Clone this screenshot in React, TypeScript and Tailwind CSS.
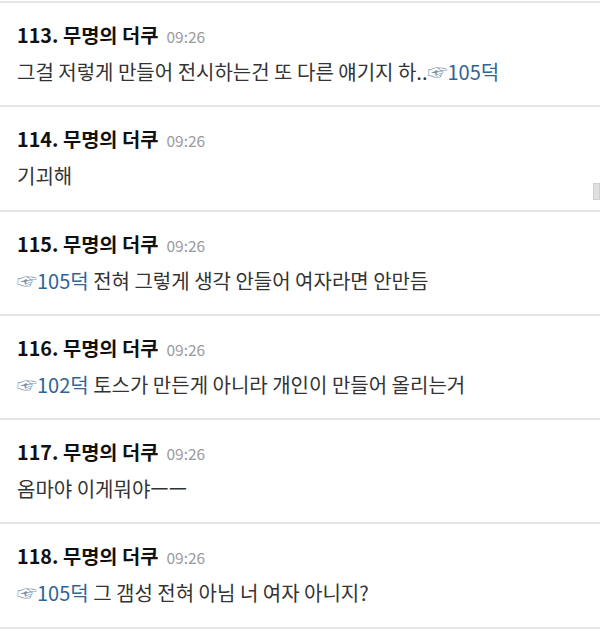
import React from 'react';

interface Comment {
  no: number;
  time: string;
  anchor?: string;
  anchorFirst?: boolean;
  text: string;
}

const comments: Comment[] = [
  { no: 113, time: '09:26', text: '그걸 저렇게 만들어 전시하는건 또 다른 얘기지 하..', anchor: '105덕' },
  { no: 114, time: '09:26', text: '기괴해' },
  { no: 115, time: '09:26', anchorFirst: true, anchor: '105덕', text: ' 전혀 그렇게 생각 안들어 여자라면 안만듬' },
  { no: 116, time: '09:26', anchorFirst: true, anchor: '102덕', text: ' 토스가 만든게 아니라 개인이 만들어 올리는거' },
  { no: 117, time: '09:26', text: '옴마야 이게뭐야ㅡㅡ' },
  { no: 118, time: '09:26', anchorFirst: true, anchor: '105덕', text: ' 그 갬성 전혀 아님 너 여자 아니지?' },
];

const font = { fontFamily: '"Noto Sans CJK KR", "Noto Sans", sans-serif' };

function Anchor({ label }: { label: string }) {
  return (
    <span className="text-[#2f6496]">
      <span className="text-[#7a8ea3]">☞</span>
      {label}
    </span>
  );
}

export default function App() {
  return (
    <div className="relative w-[600px] h-[631px] bg-white overflow-hidden pt-[1px]" style={font}>
      <ul className="border-t-2 border-[#e6e6e6]">
        {comments.map((c) => (
          <li key={c.no} className="h-[104.3px] border-b-2 border-[#e6e6e6] px-[17px] pt-[18px]">
            <div className="flex items-baseline gap-[8px] leading-[28px]">
              <span className="text-[19.8px] font-bold text-[#111]">{c.no}. 무명의 더쿠</span>
              <span className="text-[15.5px] text-[#9a9a9a]">{c.time}</span>
            </div>
            <p className="mt-[8px] text-[20px] leading-[28px] text-[#333]">
              {c.anchorFirst && c.anchor && <Anchor label={c.anchor} />}
              {c.text}
              {!c.anchorFirst && c.anchor && <Anchor label={c.anchor} />}
            </p>
          </li>
        ))}
      </ul>
      <div className="absolute right-0 top-[183px] w-[7px] h-[17px] bg-[#e0e0e0] border border-[#d0d0d0]" />
    </div>
  );
}
